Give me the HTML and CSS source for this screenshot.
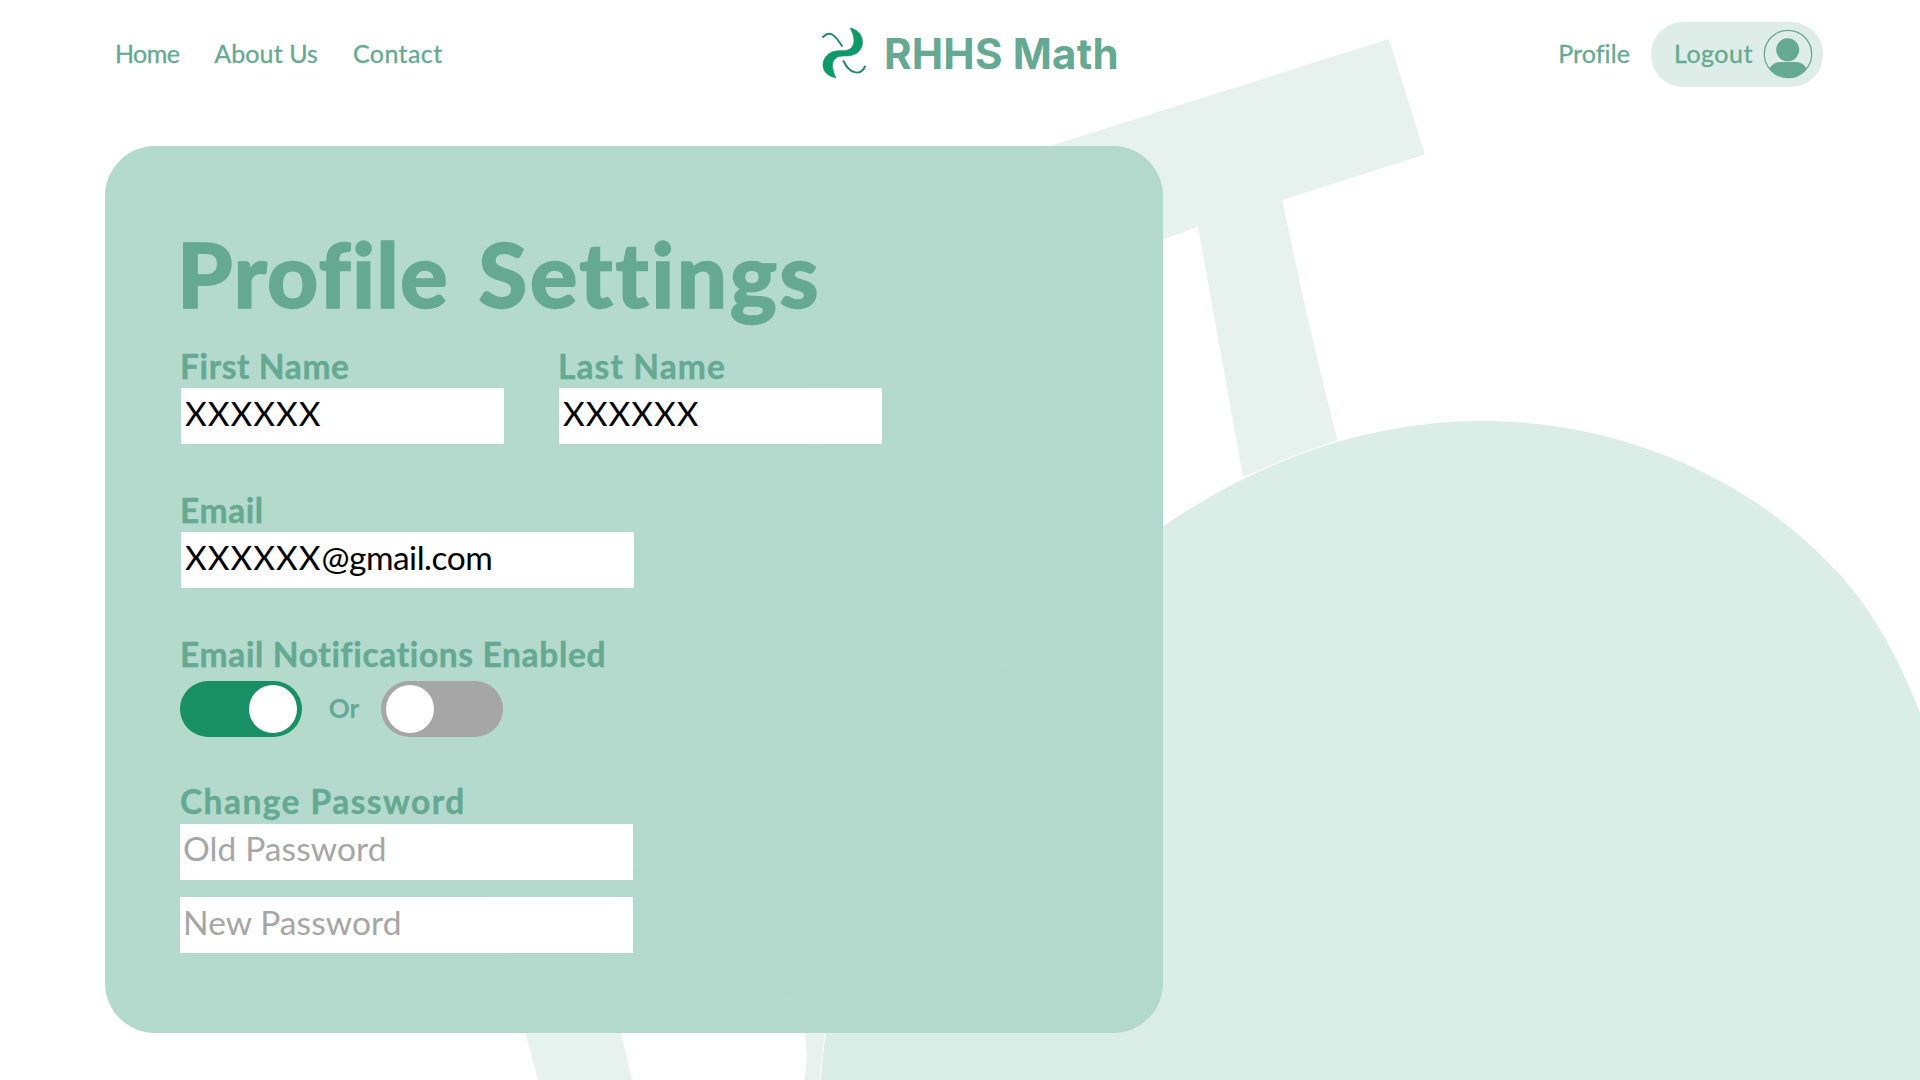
FILE: index.html
```html
<!DOCTYPE html>
<html lang="en">
<head>
<meta charset="utf-8">
<title>Profile Settings</title>
<link rel="stylesheet" href="styles.css">
</head>
<body>
<svg class="backdrop" viewBox="0 0 1920 1080" aria-hidden="true">
  <path class="backdrop-pi" d="M1389 39L1050 146Q1000 162 947 180Q850 215 827 263Q806 315 802 387V452H827Q828 410 845 383Q865 330 913 317L983 293L1013 403Q1022 487 1022 553Q1020 620 1004 676Q975 710 940 760Q882 860 844 960L641 868L467 790L480 850L507 963L525.500 1033L538 1080H632L621 1033L603 950L597 898L637 917L766 977Q806 1005 806 1045Q808 1060 804 1080H1100L1120 558L1062 277L1198 226.500L1243 477L1337.500 440Q1306 318 1282.500 200L1425 154.500Z"/>
  <path class="backdrop-blob" d="M1483 420.500C1370 420.500 1262 458 1163 526C1010 638 836 820 820 1085H1925V724C1886 623 1850 576 1786 524C1700 456 1590 420.500 1483 420.500Z"/>
</svg>
<header class="topbar">
  <nav class="links">
    <a class="home">Home</a><a class="about">About Us</a><a class="contact">Contact</a>
  </nav>
  <div class="brand">
    <svg class="mark" viewBox="0 0 44 52"><path class="mark-fill" d="M28 1C35 2 40.500 8 40.500 15C40.500 22 36 27 29 28.500C24 29.500 18 28 14 31C8 35 11 45 14 51C5 49 1 44 1 38C1 32 5 27 10 25C16 22.500 22 25 27 22.500C34 19 33 9 28 1Z"/><path class="mark-line" d="M1 10C8 3 13 8 20 19M21.500 34C27 46 38 50 43 39.500"/></svg>
    <span class="brand-name">RHHS Math</span>
  </div>
  <div class="account">
    <a class="profile">Profile</a>
    <a class="logout"><span>Logout</span>
      <svg class="avatar" viewBox="0 0 50 50"><circle class="ring" cx="25" cy="25" r="23.700"/><circle cx="24.700" cy="20.800" r="11.500"/><path d="M6.500 39.500Q10 33 17 33H33Q40 33 43.500 39.500A24 24 0 0 1 6.500 39.500Z"/></svg>
    </a>
  </div>
</header>
<main class="card">
  <h1>Profile <span class="title-end">Settings</span></h1>
  <div class="row names">
    <label class="field"><span class="label l-first">First Name</span><span class="input short"><span class="wide">XXXXXX</span></span></label>
    <label class="field"><span class="label l-last">Last Name</span><span class="input short"><span class="wide">XXXXXX</span></span></label>
  </div>
  <div class="field email"><span class="label">Email</span><span class="input v-email"><span class="wide">XXXXXX</span>@gmail.com</span></div>
  <div class="field notify"><span class="label l-notify">Email Notifications Enabled</span>
    <div class="toggles"><span class="toggle on"></span><span class="or">Or</span><span class="toggle"></span></div>
  </div>
  <div class="field passwords"><span class="label l-change">Change Password</span>
    <span class="input hint v-old">Old Password</span><span class="input hint v-new">New Password</span>
  </div>
</main>
</body>
</html>
```
FILE: styles.css
```css
* { box-sizing: border-box; }
body { margin: 0; width: 1920px; height: 1080px; overflow: hidden; background: #fff; color: #65a992; font-family: Lato, sans-serif; font-variant-ligatures: none; display: flex; flex-direction: column; }
.backdrop { position: absolute; inset: 0; width: 1920px; height: 1080px; z-index: -1; }
.backdrop-pi { fill: #e7f1ed; }
.backdrop-blob { fill: #daede6; stroke: #fff; stroke-width: 1; }

.topbar { height: 146px; padding: 18px 97px 0 115px; display: grid; grid-template-columns: 1fr auto 1fr; align-items: start; }
.links, .account, .brand { display: flex; align-items: center; height: 72px; font-size: 25px; white-space: nowrap; }
.links a, .profile, .logout span { padding-bottom: 3px; -webkit-text-stroke: .3px currentColor; }
.home { letter-spacing: -.6px; }
.about { letter-spacing: .1px; }
.contact { letter-spacing: .4px; }
.profile { letter-spacing: .1px; }
.logout span { letter-spacing: .5px; padding-bottom: 2px; }
.links { gap: 35px; }
.brand { gap: 18px; width: 294px; }
.mark { flex: none; width: 44px; height: 52px; margin-top: -2px; }
.mark-fill { fill: #0b9a68; stroke: #1f8a63; stroke-width: .6; }
.mark-line { fill: none; stroke: #1f8a63; stroke-width: 1.9; stroke-linecap: round; }
.brand-name { font: 700 42px "Inter", sans-serif; letter-spacing: .2px; padding-bottom: 2px; }
.account { justify-content: flex-end; gap: 21px; }
.logout { display: flex; align-items: center; justify-content: space-between; width: 172px; height: 65px; padding: 0 10px 0 23px; border-radius: 32px; background: #deede7; }
.avatar { width: 50px; height: 50px; fill: #65a992; }
.ring { fill: none; stroke: #65a992; stroke-width: 1.3; }

.card { width: 1058px; height: 887px; margin-left: 105px; padding: 72px 75px 0; border-radius: 50px; background: rgba(174, 215, 201, .93); white-space: nowrap; }
h1 { margin: 0 0 0 -3px; font-size: 89px; line-height: 112px; font-weight: 900; letter-spacing: 1.2px; word-spacing: 7px; -webkit-text-stroke: 1.3px currentColor; }
.title-end { letter-spacing: 2.4px; }
.row { display: flex; gap: 54px; }
.field { display: flex; flex-direction: column; align-items: flex-start; }
.names { margin-top: 16px; }
.label { font-size: 33.500px; line-height: 40px; font-weight: 700; letter-spacing: .6px; padding-bottom: 2px; -webkit-text-stroke: .4px currentColor; }
.l-last { letter-spacing: 1.1px; }
.l-notify { letter-spacing: .65px; }
.input { width: 453px; height: 56px; padding: 0 4px; background: #fff; color: #000; font-size: 33.500px; line-height: 50px; }
.names .input, .email .input { margin-left: 1px; }
.short { width: 323px; }
.wide { letter-spacing: 1px; }
.v-email { letter-spacing: -.5px; }
.email, .notify { margin-top: 46px; }
.toggles { display: flex; align-items: center; margin-top: 5px; }
.toggle { width: 122px; height: 56px; padding: 4px 5px; border-radius: 28px; background: #a6a6a6; display: flex; }
.toggle::before { content: ""; width: 48px; height: 48px; border-radius: 50%; background: #fff; }
.on { background: #188f64; justify-content: flex-end; }
.or { width: 79px; padding: 0 0 2px 5px; text-align: center; font-size: 26px; font-weight: 700; }
.passwords { margin-top: 44px; }
.l-change { letter-spacing: 1.45px; padding-bottom: 3px; }
.hint { padding-left: 3px; color: #a6a6a6; line-height: 48px; letter-spacing: .1px; }
.v-new { margin-top: 17px; line-height: 50px; }
```
